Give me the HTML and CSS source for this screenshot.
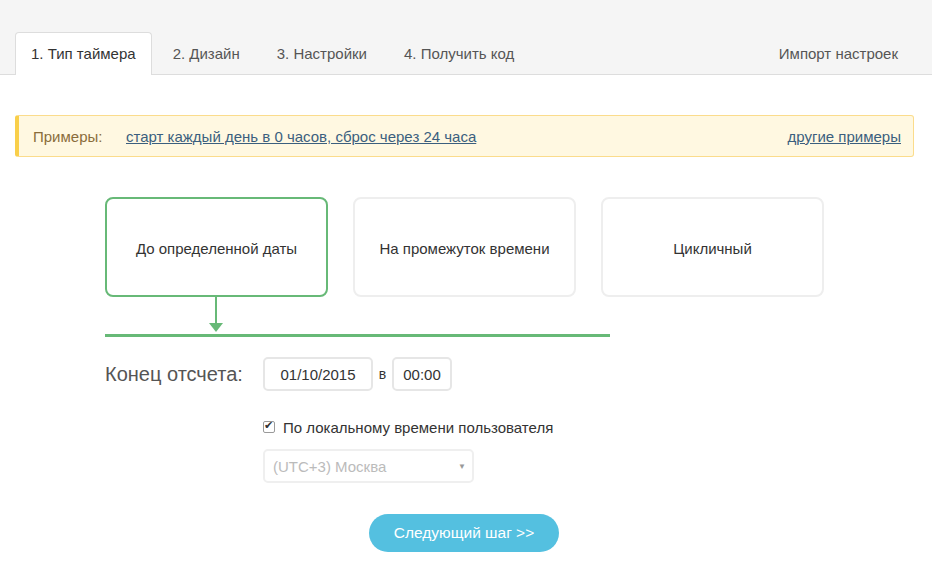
FILE: index.html
```html
<!DOCTYPE html>
<html lang="ru">
<head>
  <meta charset="UTF-8">
  <meta name="viewport" content="width=device-width, initial-scale=1.0">
  <title>Таймер</title>
  <link rel="stylesheet" href="styles.css">
</head>
<body>
  <div class="header">
    <ul class="tabs">
      <li class="tab active">1. Тип таймера</li>
      <li class="tab">2. Дизайн</li>
      <li class="tab">3. Настройки</li>
      <li class="tab">4. Получить код</li>
      <li class="tab import">Импорт настроек</li>
    </ul>
  </div>

  <div class="alert">
    <span class="alert-label">Примеры:</span>
    <a href="#" class="alert-link">старт каждый день в 0 часов, сброс через 24 часа</a>
    <a href="#" class="alert-link more">другие примеры</a>
  </div>

  <div class="content">
    <div class="cards">
      <div class="card selected">До определенной даты</div>
      <div class="card">На промежуток времени</div>
      <div class="card">Цикличный</div>
    </div>
    <div class="pointer">
      <svg width="16" height="37" viewBox="0 0 16 37">
        <rect x="7" y="0" width="2" height="28" fill="#67b977"/>
        <polygon points="1,26 15,26 8,35" fill="#67b977"/>
      </svg>
    </div>
    <div class="track"></div>

    <div class="form-row">
      <label class="form-label">Конец отсчета:</label>
      <input type="text" class="field date-field" value="01/10/2015">
      <span class="sep">в</span>
      <input type="text" class="field time-field" value="00:00">
    </div>

    <div class="form-offset">
      <label class="check">
        <input type="checkbox" checked>
        <span>По локальному времени пользователя</span>
      </label>
      <div class="select disabled">
        <span>(UTC+3) Москва</span>
        <span class="caret">&#9660;</span>
      </div>
    </div>

    <button class="btn">Следующий шаг &gt;&gt;</button>
  </div>
</body>
</html>
```

FILE: styles.css
```css
:root {
  --green: #67b977;
  --border: #ddd;
  --text: #333;
}

body {
  margin: 0;
  font-family: 'Liberation Sans', Arial, sans-serif;
  font-size: 15px;
  color: var(--text);
  background: #fff;
}

/* Tabs */
.header {
  background: #f5f5f5;
  border-bottom: 1px solid var(--border);
  padding-top: 32px;
}

.tabs {
  display: flex;
  margin: 0;
  padding: 0 15px;
  list-style: none;
}

.tab {
  height: 43px;
  line-height: 42px;
  padding: 0 15px;
  margin-right: 5px;
  margin-bottom: -1px;
  color: #555;
  border: 1px solid transparent;
  border-bottom: none;
  border-radius: 4px 4px 0 0;
  box-sizing: border-box;
}

.tab.active {
  background: #fff;
  border-color: var(--border);
  color: var(--text);
}

.tab.import {
  margin-left: auto;
  margin-right: 3px;
}

/* Examples */
.alert {
  display: flex;
  align-items: center;
  height: 42px;
  margin: 40px 18px 0 15px;
  padding: 0 12px 0 14px;
  background: #fff8e1;
  border: 1px solid #fbdc8c;
  border-left: 4px solid #f9cf4a;
  border-radius: 3px;
  box-sizing: border-box;
}

.alert-label {
  color: #8a6d3b;
  width: 93px;
}

.alert-link {
  color: #3b5f7e;
  text-decoration: underline;
}

.alert-link.more {
  margin-left: auto;
}

/* Timer types */
.content {
  padding-left: 105px;
}

.cards {
  display: flex;
  gap: 25px;
  margin-top: 40px;
}

.card {
  width: 223px;
  height: 100px;
  box-sizing: border-box;
  border: 2px solid #eee;
  border-radius: 8px;
  display: flex;
  align-items: center;
  justify-content: center;
  padding-top: 2px;
}

.card.selected {
  border-color: var(--green);
}

.pointer {
  margin-left: 103px;
  height: 37px;
}

.pointer svg {
  display: block;
}

.track {
  width: 505px;
  height: 3px;
  background: var(--green);
}

/* Form */
.form-row {
  display: flex;
  align-items: center;
  margin-top: 20px;
}

.form-label {
  width: 158px;
  font-size: 20px;
  color: #555;
}

.field {
  height: 34px;
  box-sizing: border-box;
  border: 2px solid #e6e6e6;
  border-radius: 5px;
  font-family: inherit;
  font-size: 15px;
  color: var(--text);
  text-align: center;
  padding: 0 4px;
}

.date-field {
  width: 110px;
}

.time-field {
  width: 60px;
}

.sep {
  width: 19px;
  text-align: center;
  font-size: 14px;
}

.form-offset {
  margin-left: 158px;
}

.check {
  display: flex;
  align-items: center;
  margin-top: 27px;
  height: 18px;
}

.check input {
  appearance: none;
  -webkit-appearance: none;
  margin: 0 8px 0 0;
  width: 12px;
  height: 12px;
  border: 1px solid #9a9a9a;
  border-radius: 2px;
  background: #fff;
  position: relative;
  box-sizing: border-box;
}

.check input:checked::after {
  content: "\2714";
  position: absolute;
  left: 0;
  top: -3px;
  font-size: 11px;
  color: #333;
}

.select {
  width: 211px;
  height: 34px;
  margin-top: 13px;
  box-sizing: border-box;
  border: 2px solid #efefef;
  border-radius: 5px;
  padding: 0 6px 0 8px;
  display: flex;
  align-items: center;
  justify-content: space-between;
  color: #bbb;
}

.caret {
  font-size: 8px;
  color: #999;
}

.btn {
  display: block;
  margin: 31px 0 0 264px;
  width: 190px;
  height: 38px;
  border: none;
  border-radius: 19px;
  background: #54c0e0;
  color: #fff;
  font-family: inherit;
  font-size: 15.5px;
  cursor: pointer;
}
```
